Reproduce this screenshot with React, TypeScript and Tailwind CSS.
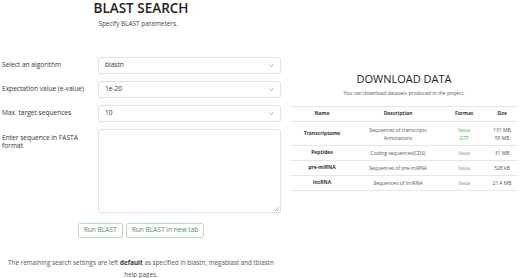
const ROWS = [
  { name: "Transcriptome", desc: ["Sequences of transcripts", "Annotations"], format: ["fasta", "GTF"], size: ["131 MB", "58 MB"] },
  { name: "Peptides", desc: ["Coding sequences(CDS)"], format: ["fasta"], size: ["31 MB"] },
  { name: "pre-miRNA", desc: ["Sequences of pre-miRNA"], format: ["fasta"], size: ["528 kB"] },
  { name: "lncRNA", desc: ["Sequences of lncRNA"], format: ["fasta"], size: ["21.4 MB"] },
]

const SELECTS = [
  { label: "Select an algorithm", value: "blastn" },
  { label: "Expectation value (e-value)", value: "1e-20" },
  { label: "Max. target sequences", value: "10" },
]

function Chevron() {
  return (
    <svg width="5" height="3" viewBox="0 0 5 3" className="shrink-0">
      <path d="M0.5 0.5 L2.5 2.5 L4.5 0.5" fill="none" stroke="#8a8a8a" strokeWidth="0.8" />
    </svg>
  )
}

export default function App() {
  return (
    <div className="w-[520px] h-[278px] bg-white overflow-hidden flex text-[#333]" style={{ fontFamily: '"Open Sans", sans-serif' }}>
      {/* left: blast form */}
      <div className="w-[282px] h-full flex flex-col">
        <h1 className="text-center text-[13.5px] font-semibold leading-[16px] text-[#222]">BLAST SEARCH</h1>
        <p className="text-center text-[6.4px] leading-none text-[#444] mt-[4.5px] pr-[6px]">Specify BLAST parameters.</p>

        <div className="flex flex-col gap-[7px] mt-[30px]">
          {SELECTS.map((s) => (
            <div key={s.label} className="flex items-center">
              <span className="w-[98px] pl-[2px] text-[6.6px] leading-none">{s.label}</span>
              <div className="w-[183px] h-[17px] flex items-center justify-between px-[6px] border border-[#e2e2e2] rounded-[2px] text-[6.6px]">
                <span>{s.value}</span>
                <Chevron />
              </div>
            </div>
          ))}
          <div className="flex items-start">
            <span className="w-[98px] pl-[2px] pr-[14px] pt-[5px] text-[6.6px] leading-[8px]">Enter sequence in FASTA format</span>
            <div className="relative w-[183px] h-[84px] border border-[#e2e2e2] rounded-[2px]">
              <svg width="4" height="4" viewBox="0 0 4 4" className="absolute right-[1px] bottom-[1px]">
                <path d="M4 0 L0 4 M4 2 L2 4" stroke="#999" strokeWidth="0.7" />
              </svg>
            </div>
          </div>
        </div>

        <div className="flex justify-center gap-[3px] mt-[10px]">
          <button className="h-[15px] px-[5px] border border-[#b8dfba] rounded-[2px] text-[6.6px] text-[#3f9a4a] leading-none">Run BLAST</button>
          <button className="h-[15px] px-[5px] border border-[#b8dfba] rounded-[2px] text-[6.6px] text-[#3f9a4a] leading-none">Run BLAST in new tab</button>
        </div>

        <p className="mt-auto mb-[-3px] text-center text-[6.3px] leading-[12px] text-[#555]">
          The remaining search settings are left <b className="font-bold text-[#333]">default</b> as specified in blastn, megablast and tblastn
          <br />
          help pages.
        </p>
      </div>

      {/* right: downloads */}
      <div className="flex-1 flex flex-col pl-[8px] pr-[2px] pt-[73px]">
        <h2 className="text-center text-[11px] font-medium leading-none text-[#222]">DOWNLOAD DATA</h2>
        <p className="text-center text-[5px] leading-none text-[#555] mt-[7px]">You can download datasets produced in the project.</p>

        <table className="mt-[10px] w-full border-collapse text-[5px] text-center text-[#555]">
          <thead>
            <tr className="h-[15px] border-y border-[#e6e6e6] text-[#333]">
              <th className="w-[64px] font-bold">Name</th>
              <th className="w-[88px] font-bold">Description</th>
              <th className="w-[44px] font-bold">Format</th>
              <th className="w-[32px] font-bold">Size</th>
            </tr>
          </thead>
          <tbody>
            {ROWS.map((r) => (
              <tr key={r.name} className={`border-b border-[#e6e6e6] ${r.desc.length > 1 ? "h-[24px]" : "h-[15px]"}`}>
                <td className="font-bold text-[#333]">{r.name}</td>
                <td className="leading-[8px]">{r.desc.map((d) => <div key={d}>{d}</div>)}</td>
                <td className="leading-[8px] text-[#4caf50]">{r.format.map((d) => <div key={d}>{d}</div>)}</td>
                <td className="leading-[8px]">{r.size.map((d) => <div key={d}>{d}</div>)}</td>
              </tr>
            ))}
          </tbody>
        </table>
      </div>
    </div>
  )
}
